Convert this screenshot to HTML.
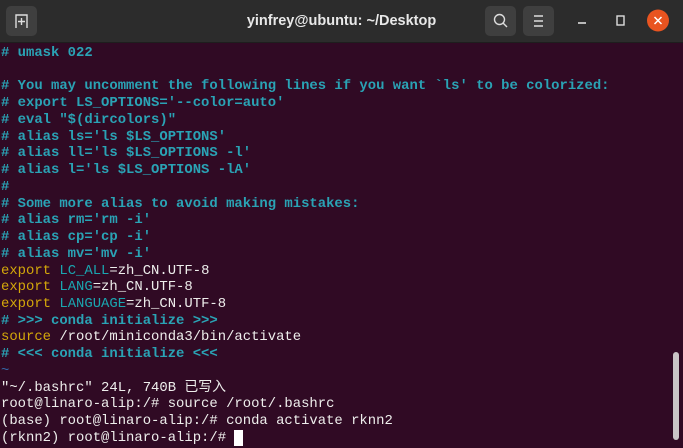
<!DOCTYPE html>
<html><head><meta charset="utf-8"><style>
body{margin:0;width:683px;height:448px;overflow:hidden;background:#300a24;font-family:"Liberation Sans",sans-serif}
#hd{position:absolute;left:0;top:0;width:683px;height:42px;background:#2c2c2c;border-bottom:1px solid #1e1e1e}
.btn{position:absolute;top:6px;width:31px;height:30px;background:#3f3f3f;border-radius:5px}
#title{position:absolute;left:0;width:683px;top:13px;text-align:center;color:#e8e8e8;font-weight:bold;font-size:14.5px}
#term{position:absolute;left:1px;top:45px;font-family:"Liberation Mono","Noto Sans CJK SC",monospace;font-size:13.9px;line-height:16.74px;color:#eeeeec;white-space:pre}
.c{color:#2aa3b5;font-weight:bold}.y{color:#d4a80a}.t{color:#1aa6b0}.b{color:#3465a4}
#sb{position:absolute;left:673px;top:352px;width:6px;height:88px;background:#c9c4c6;border-radius:3px}
</style></head><body>
<div id="hd">
<div class="btn" style="left:6px"><svg width="31" height="30"><path d="M10 22V9h11v13" stroke="#ddd" stroke-width="1.4" fill="none"/><path d="M15.5 12v7M12 15.5h7" stroke="#ddd" stroke-width="1.4"/></svg></div>
<div id="title">yinfrey@ubuntu: ~/Desktop</div>
<div class="btn" style="left:485px"><svg width="31" height="30"><circle cx="14.5" cy="13.5" r="5" stroke="#ddd" stroke-width="1.4" fill="none"/><path d="M18 17l4 4" stroke="#ddd" stroke-width="1.4"/></svg></div>
<div class="btn" style="left:523px"><svg width="31" height="30"><path d="M11 10h9M11 15h9M11 20h9" stroke="#ddd" stroke-width="1.4"/></svg></div>
<svg style="position:absolute;left:570px;top:8px" width="100" height="26"><path d="M8 15h8" stroke="#ddd" stroke-width="1.6"/><rect x="47" y="8" width="7" height="9" stroke="#ddd" stroke-width="1.4" fill="none"/><circle cx="88" cy="12.5" r="11" fill="#e95420"/><path d="M84.5 9l7 7M91.5 9l-7 7" stroke="#fff" stroke-width="1.5"/></svg>
</div>
<div id="term"><span class="c"># umask 022</span>

<span class="c"># You may uncomment the following lines if you want `ls' to be colorized:</span>
<span class="c"># export LS_OPTIONS='--color=auto'</span>
<span class="c"># eval "$(dircolors)"</span>
<span class="c"># alias ls='ls $LS_OPTIONS'</span>
<span class="c"># alias ll='ls $LS_OPTIONS -l'</span>
<span class="c"># alias l='ls $LS_OPTIONS -lA'</span>
<span class="c">#</span>
<span class="c"># Some more alias to avoid making mistakes:</span>
<span class="c"># alias rm='rm -i'</span>
<span class="c"># alias cp='cp -i'</span>
<span class="c"># alias mv='mv -i'</span>
<span class="y">export</span> <span class="t">LC_ALL</span>=zh_CN.UTF-8
<span class="y">export</span> <span class="t">LANG</span>=zh_CN.UTF-8
<span class="y">export</span> <span class="t">LANGUAGE</span>=zh_CN.UTF-8
<span class="c"># &gt;&gt;&gt; conda initialize &gt;&gt;&gt;</span>
<span class="y">source</span> /root/miniconda3/bin/activate
<span class="c"># &lt;&lt;&lt; conda initialize &lt;&lt;&lt;</span>
<span class="b">~</span>
"~/.bashrc" 24L, 740B 已写入
root@linaro-alip:/# source /root/.bashrc
(base) root@linaro-alip:/# conda activate rknn2
(rknn2) root@linaro-alip:/# <span style="background:#fff">&nbsp;</span></div>
<div id="sb"></div>
</body></html>
